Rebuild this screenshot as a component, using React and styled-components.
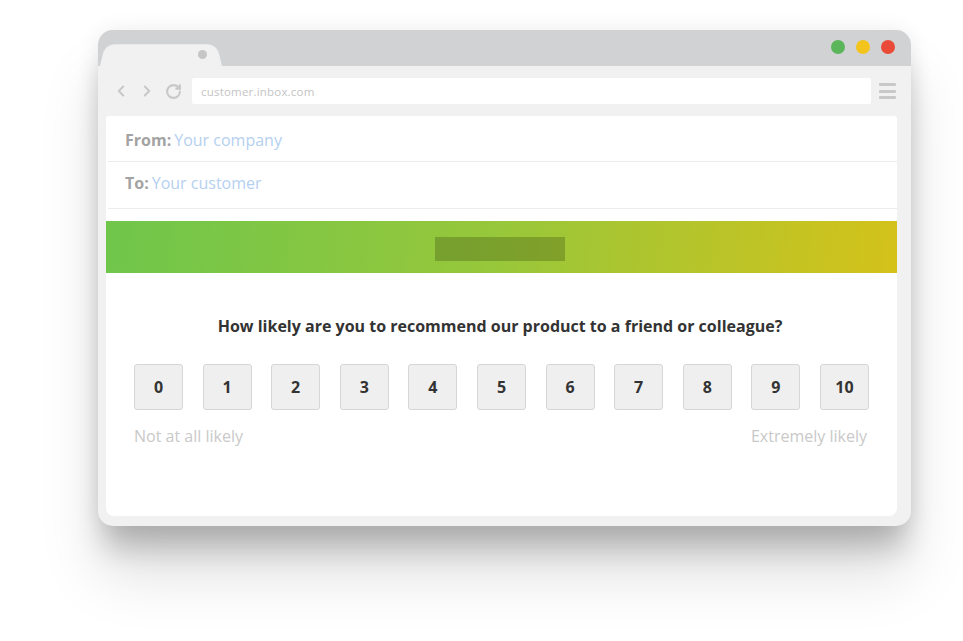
import React from "react";
import styled, { createGlobalStyle } from "styled-components";
import { ChevronLeft, ChevronRight, RotateCw } from "lucide-react";

const GlobalStyle = createGlobalStyle`
  html, body {
    margin: 0;
    padding: 0;
    background: #fff;
  }
  body {
    font-family: "Open Sans", "Liberation Sans", sans-serif;
  }
`;

const scores = [0, 1, 2, 3, 4, 5, 6, 7, 8, 9, 10];

const App = () => {
  return (
    <>
      <GlobalStyle />
      <Page>
        <BrowserWindow>
          <TitleBar>
            <Tab>
              <TabDot />
            </Tab>
            <Lights>
              <Light color="#5bb55a" />
              <Light color="#f3c41b" />
              <Light color="#ea4b38" />
            </Lights>
          </TitleBar>
          <Toolbar>
            <NavIcons>
              <ChevronLeft size={18} strokeWidth={2.6} color="#c8c8c8" />
              <ChevronRight size={18} strokeWidth={2.6} color="#c8c8c8" />
              <RotateCw size={17} strokeWidth={3} color="#c8c8c8" />
            </NavIcons>
            <UrlBar>customer.inbox.com</UrlBar>
            <Menu>
              <span />
              <span />
              <span />
            </Menu>
          </Toolbar>
          <Frame>
            <Content>
              <MailRow $h={46} $top={3}>
                <Label>From:</Label>
                <Value>Your company</Value>
              </MailRow>
              <MailRow $h={47} $bottom={4}>
                <Label>To:</Label>
                <Value>Your customer</Value>
              </MailRow>
              <Banner>
                <LogoBox />
              </Banner>
              <Survey>
                <Question>
                  How likely are you to recommend our product to a friend or
                  colleague?
                </Question>
                <Scale>
                  {scores.map((n) => (
                    <ScoreBtn key={n}>{n}</ScoreBtn>
                  ))}
                </Scale>
                <Hints>
                  <span>Not at all likely</span>
                  <span>Extremely likely</span>
                </Hints>
              </Survey>
            </Content>
          </Frame>
        </BrowserWindow>
      </Page>
    </>
  );
};

const Page = styled.div`
  width: 963px;
  height: 641px;
  padding: 30px 0 0 98px;
  box-sizing: border-box;
  overflow: hidden;
`;

const BrowserWindow = styled.div`
  width: 813px;
  height: 496px;
  border-radius: 15px;
  background: #f1f1f1;
  display: flex;
  flex-direction: column;
  overflow: hidden;
  box-shadow: 0 28px 28px -6px rgba(0, 0, 0, 0.2),
    0 48px 60px rgba(0, 0, 0, 0.13), 0 0 22px rgba(0, 0, 0, 0.07);
`;

const TitleBar = styled.div`
  height: 36px;
  flex-shrink: 0;
  background: #d1d2d4;
  display: flex;
  align-items: flex-end;
  justify-content: space-between;
  padding: 0 16px 0 2px;
`;

const Tab = styled.div`
  position: relative;
  width: 122px;
  height: 24px;

  &::before {
    content: "";
    position: absolute;
    inset: 0;
    background: #f1f1f1;
    border-radius: 10px 10px 0 0;
    transform: perspective(40px) rotateX(9deg);
    transform-origin: bottom;
  }
`;

const TabDot = styled.div`
  position: absolute;
  left: 98px;
  top: 8px;
  width: 9px;
  height: 9px;
  border-radius: 50%;
  background: #c6c6c6;
`;

const Lights = styled.div`
  display: flex;
  gap: 11px;
  align-self: center;
  margin-top: -2px;
`;

const Light = styled.div`
  width: 14px;
  height: 14px;
  border-radius: 50%;
  background: ${(p) => p.color};
`;

const Toolbar = styled.div`
  height: 50px;
  flex-shrink: 0;
  display: flex;
  align-items: center;
  padding: 0 15px 0 14px;
`;

const NavIcons = styled.div`
  display: flex;
  align-items: center;
  gap: 8px;
  width: 80px;
  svg:last-child {
    margin-left: 1px;
  }
`;

const UrlBar = styled.div`
  flex: 1;
  height: 26px;
  background: #fff;
  border-radius: 2px;
  display: flex;
  align-items: center;
  padding-left: 9px;
  font-size: 11.5px;
  color: #c4c4c4;
  letter-spacing: 0.2px;
`;

const Menu = styled.div`
  width: 17px;
  margin-left: 8px;
  display: flex;
  flex-direction: column;
  gap: 3.5px;

  span {
    display: block;
    height: 3px;
    border-radius: 1px;
    background: #c8c8c8;
  }
`;

const Frame = styled.div`
  flex: 1;
  padding: 0 14px 10px 8px;
  display: flex;
`;

const Content = styled.div`
  flex: 1;
  background: #fff;
  border-radius: 3px 3px 8px 8px;
  display: flex;
  flex-direction: column;
`;

const MailRow = styled.div`
  height: ${(p) => p.$h}px;
  flex-shrink: 0;
  box-sizing: border-box;
  padding: ${(p) => p.$top || 0}px 0 ${(p) => p.$bottom || 0}px 17px;
  margin-left: 2px;
  display: flex;
  align-items: center;
  border-bottom: 1.5px solid #ececec;
  font-size: 16px;
`;

const Label = styled.span`
  color: #a3a3a3;
  font-weight: 700;
`;

const Value = styled.span`
  color: #b5d0f0;
  margin-left: 3px;
`;

const Banner = styled.div`
  margin-top: 12px;
  height: 52px;
  flex-shrink: 0;
  background: linear-gradient(95deg, #6fc64b 0%, #98c73a 50%, #d4c21a 100%);
  display: flex;
  align-items: center;
  justify-content: center;
`;

const LogoBox = styled.div`
  width: 130px;
  height: 24px;
  margin: 4px 0 0 -3px;
  background: rgba(70, 90, 20, 0.35);
`;

const Survey = styled.div`
  padding: 42px 28px 0;
`;

const Question = styled.div`
  text-align: center;
  font-size: 16px;
  font-weight: 700;
  color: #333;
  margin-left: -3px;
`;

const Scale = styled.div`
  margin-top: 27px;
  display: flex;
  justify-content: space-between;
`;

const ScoreBtn = styled.div`
  width: 49px;
  height: 46px;
  box-sizing: border-box;
  border: 1px solid #d6d6d6;
  border-radius: 3px;
  background: #efefef;
  display: flex;
  align-items: center;
  justify-content: center;
  font-size: 16px;
  font-weight: 700;
  color: #333;
`;

const Hints = styled.div`
  margin-top: 15px;
  padding-right: 2px;
  display: flex;
  justify-content: space-between;
  font-size: 16px;
  color: #c9c9c9;
`;

export default App;
